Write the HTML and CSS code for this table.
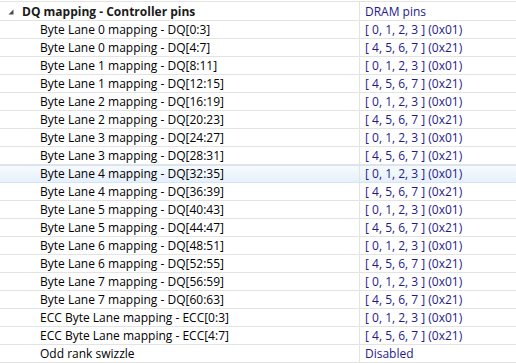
FILE: index.html
```html
<!DOCTYPE html>
<html>
<head>
<meta charset="utf-8">
<link rel="stylesheet" href="styles.css">
</head>
<body>
<div class="table">
  <div class="row head">
    <div class="cell name"><svg class="tri" width="6" height="6" viewBox="0 0 6 6"><polygon points="5.5,0.5 5.5,5.5 0.5,5.5" /></svg><span>DQ mapping - Controller pins</span></div>
    <div class="cell val">DRAM pins</div>
  </div>
  <div class="row"><div class="cell name item">Byte Lane 0 mapping - DQ[0:3]</div><div class="cell val">[ 0, 1, 2, 3 ] (0x01)</div></div>
  <div class="row"><div class="cell name item">Byte Lane 0 mapping - DQ[4:7]</div><div class="cell val">[ 4, 5, 6, 7 ] (0x21)</div></div>
  <div class="row"><div class="cell name item">Byte Lane 1 mapping - DQ[8:11]</div><div class="cell val">[ 0, 1, 2, 3 ] (0x01)</div></div>
  <div class="row"><div class="cell name item">Byte Lane 1 mapping - DQ[12:15]</div><div class="cell val">[ 4, 5, 6, 7 ] (0x21)</div></div>
  <div class="row"><div class="cell name item">Byte Lane 2 mapping - DQ[16:19]</div><div class="cell val">[ 0, 1, 2, 3 ] (0x01)</div></div>
  <div class="row"><div class="cell name item">Byte Lane 2 mapping - DQ[20:23]</div><div class="cell val">[ 4, 5, 6, 7 ] (0x21)</div></div>
  <div class="row"><div class="cell name item">Byte Lane 3 mapping - DQ[24:27]</div><div class="cell val">[ 0, 1, 2, 3 ] (0x01)</div></div>
  <div class="row"><div class="cell name item">Byte Lane 3 mapping - DQ[28:31]</div><div class="cell val">[ 4, 5, 6, 7 ] (0x21)</div></div>
  <div class="row hover"><div class="cell name item">Byte Lane 4 mapping - DQ[32:35]</div><div class="cell val">[ 0, 1, 2, 3 ] (0x01)</div></div>
  <div class="row"><div class="cell name item">Byte Lane 4 mapping - DQ[36:39]</div><div class="cell val">[ 4, 5, 6, 7 ] (0x21)</div></div>
  <div class="row"><div class="cell name item">Byte Lane 5 mapping - DQ[40:43]</div><div class="cell val">[ 0, 1, 2, 3 ] (0x01)</div></div>
  <div class="row"><div class="cell name item">Byte Lane 5 mapping - DQ[44:47]</div><div class="cell val">[ 4, 5, 6, 7 ] (0x21)</div></div>
  <div class="row"><div class="cell name item">Byte Lane 6 mapping - DQ[48:51]</div><div class="cell val">[ 0, 1, 2, 3 ] (0x01)</div></div>
  <div class="row"><div class="cell name item">Byte Lane 6 mapping - DQ[52:55]</div><div class="cell val">[ 4, 5, 6, 7 ] (0x21)</div></div>
  <div class="row"><div class="cell name item">Byte Lane 7 mapping - DQ[56:59]</div><div class="cell val">[ 0, 1, 2, 3 ] (0x01)</div></div>
  <div class="row"><div class="cell name item">Byte Lane 7 mapping - DQ[60:63]</div><div class="cell val">[ 4, 5, 6, 7 ] (0x21)</div></div>
  <div class="row"><div class="cell name item">ECC Byte Lane mapping - ECC[0:3]</div><div class="cell val">[ 0, 1, 2, 3 ] (0x01)</div></div>
  <div class="row"><div class="cell name item">ECC Byte Lane mapping - ECC[4:7]</div><div class="cell val">[ 4, 5, 6, 7 ] (0x21)</div></div>
  <div class="row"><div class="cell name item">Odd rank swizzle</div><div class="cell val">Disabled</div></div>
</div>
</body>
</html>
```
FILE: styles.css
```css
html, body {
  margin: 0;
  padding: 0;
  background: #ffffff;
}
body {
  font-family: "Open Sans", "Noto Sans", sans-serif;
  font-size: 12px;
  color: #000000;
}
.table {
  margin-top: 1px;
  border-top: 1px solid #e3e3e3;
  width: 516px;
}
.row {
  display: grid;
  grid-template-columns: 360px 1fr;
  height: 17px;
  border-bottom: 1px solid #e3e3e3;
  box-sizing: content-box;
}
.row.head {
  height: 18px;
}
.cell {
  display: flex;
  align-items: center;
  white-space: nowrap;
  overflow: hidden;
}
.name {
  border-right: 1px solid #e3e3e3;
}
.item {
  padding-left: 40px;
}
.head .name {
  padding-left: 8px;
  font-weight: bold;
  color: #1a1a1a;
}
.tri {
  fill: #4a4a4a;
  margin-right: 8px;
  margin-top: 2px;
}
.val {
  padding-left: 5px;
  color: #1f1a8a;
}
.row.hover {
  background: linear-gradient(#f7fbff, #e6f0fb);
  box-shadow: inset 0 1px 0 #d6e5f5;
  border-bottom-color: #d6e5f5;
}
```
